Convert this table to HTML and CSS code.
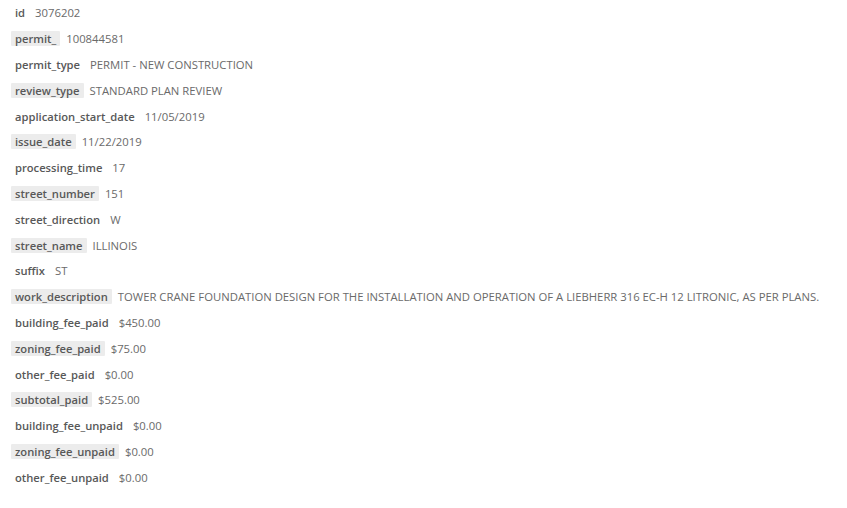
FILE: index.html
```html
<!DOCTYPE html>
<html lang="en">
<head>
  <meta charset="UTF-8">
  <title>Permit 3076202</title>
  <link rel="stylesheet" href="styles.css">
</head>
<body>
  <div class="record">
    <div class="field"><span class="key">id</span><span class="val">3076202</span></div>
    <div class="field alt"><span class="key">permit_</span><span class="val">100844581</span></div>
    <div class="field"><span class="key">permit_type</span><span class="val">PERMIT - NEW CONSTRUCTION</span></div>
    <div class="field alt"><span class="key">review_type</span><span class="val">STANDARD PLAN REVIEW</span></div>
    <div class="field"><span class="key">application_start_date</span><span class="val">11/05/2019</span></div>
    <div class="field alt"><span class="key">issue_date</span><span class="val">11/22/2019</span></div>
    <div class="field"><span class="key">processing_time</span><span class="val">17</span></div>
    <div class="field alt"><span class="key">street_number</span><span class="val">151</span></div>
    <div class="field"><span class="key">street_direction</span><span class="val">W</span></div>
    <div class="field alt"><span class="key">street_name</span><span class="val">ILLINOIS</span></div>
    <div class="field"><span class="key">suffix</span><span class="val">ST</span></div>
    <div class="field alt"><span class="key">work_description</span><span class="val">TOWER CRANE FOUNDATION DESIGN FOR THE INSTALLATION AND OPERATION OF A LIEBHERR 316 EC-H 12 LITRONIC, AS PER PLANS.</span></div>
    <div class="field"><span class="key">building_fee_paid</span><span class="val">$450.00</span></div>
    <div class="field alt"><span class="key">zoning_fee_paid</span><span class="val">$75.00</span></div>
    <div class="field"><span class="key">other_fee_paid</span><span class="val">$0.00</span></div>
    <div class="field alt"><span class="key">subtotal_paid</span><span class="val">$525.00</span></div>
    <div class="field"><span class="key">building_fee_unpaid</span><span class="val">$0.00</span></div>
    <div class="field alt"><span class="key">zoning_fee_unpaid</span><span class="val">$0.00</span></div>
    <div class="field"><span class="key">other_fee_unpaid</span><span class="val">$0.00</span></div>
  </div>
</body>
</html>
```

FILE: styles.css
```css
* {
  margin: 0;
  padding: 0;
  box-sizing: border-box;
}

body {
  font-family: 'Open Sans', sans-serif;
  background: #fff;
  padding: 0 11px;
}

.field {
  display: flex;
  align-items: center;
  height: 25.8px;
}

.key {
  font-size: 11.2px;
  font-weight: 600;
  color: #585858;
  padding: 0 4px;
  line-height: 15px;
  border-radius: 1px;
}

.alt .key {
  background-color: #ececec;
}

.val {
  font-size: 11.3px;
  color: #6a6a6a;
  margin-left: 6px;
  white-space: nowrap;
}
```
